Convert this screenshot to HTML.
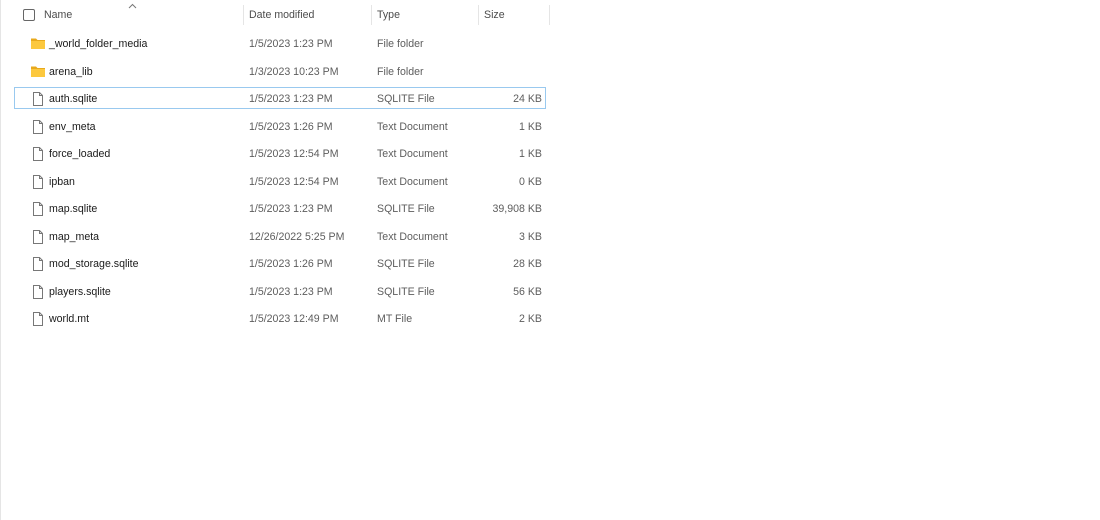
<!DOCTYPE html>
<html><head><style>
html,body{margin:0;padding:0;width:1100px;height:520px;background:#fff;overflow:hidden;font-family:"Liberation Sans",sans-serif;font-size:10.6px;}
.lb{position:absolute;left:0;top:0;width:1px;height:520px;background:#e5e5e5}
.h{position:absolute;top:0;height:30px;left:0;width:560px;color:#4c4c4c}
.sep{position:absolute;top:5px;width:1px;height:20px;background:#e5e5e5}
.t{position:absolute;white-space:nowrap}
.row{position:absolute;left:14px;width:532px;height:22px}
.sel{border:1px solid #99c9ef;box-sizing:border-box}
.sel>*{margin-left:-1px}
.n{position:absolute;left:35px;top:5px;color:#1a1a1a}
.d{position:absolute;left:235px;top:5px;color:#5d5d5d}
.ty{position:absolute;left:363px;top:5px;color:#5d5d5d}
.s{position:absolute;right:4px;top:5px;color:#5d5d5d}
.sel .s{margin-right:-1px}
.ic{position:absolute;left:16px;top:3px}
</style></head><body>
<div class="lb"></div>
<div class="h">
<div style="position:absolute;left:23px;top:9px;width:10px;height:10px;border:1px solid #666;border-radius:2px"></div>
<div class="t" style="left:44px;top:9px">Name</div>
<svg style="position:absolute;left:128px;top:3px" width="9" height="6"><path d="M1 5 L4.5 1.5 L8 5" fill="none" stroke="#777" stroke-width="1"/></svg>
<div class="sep" style="left:243px"></div>
<div class="t" style="left:249px;top:9px">Date modified</div>
<div class="sep" style="left:371px"></div>
<div class="t" style="left:377px;top:9px">Type</div>
<div class="sep" style="left:478px"></div>
<div class="t" style="left:484px;top:9px">Size</div>
<div class="sep" style="left:549px"></div>
</div>
<div id="rows"></div>
<script>
var R=[["_world_folder_media","1/5/2023 1:23 PM","File folder","",1],
["arena_lib","1/3/2023 10:23 PM","File folder","",1],
["auth.sqlite","1/5/2023 1:23 PM","SQLITE File","24 KB",0],
["env_meta","1/5/2023 1:26 PM","Text Document","1 KB",0],
["force_loaded","1/5/2023 12:54 PM","Text Document","1 KB",0],
["ipban","1/5/2023 12:54 PM","Text Document","0 KB",0],
["map.sqlite","1/5/2023 1:23 PM","SQLITE File","39,908 KB",0],
["map_meta","12/26/2022 5:25 PM","Text Document","3 KB",0],
["mod_storage.sqlite","1/5/2023 1:26 PM","SQLITE File","28 KB",0],
["players.sqlite","1/5/2023 1:23 PM","SQLITE File","56 KB",0],
["world.mt","1/5/2023 12:49 PM","MT File","2 KB",0]];
var folder='<svg class="ic" width="16" height="14"><path d="M1 2.5h5l1.5 1.5H15v9H1z" fill="#e8a91c"/><path d="M1 5h14v8H1z" fill="#fcc83e"/></svg>';
var file='<svg class="ic" width="16" height="16"><path d="M3.5 1.5h6l3 3v10h-9z" fill="#fff" stroke="#777"/><path d="M9.5 1.5v3h3" fill="none" stroke="#777"/></svg>';
var h='';
R.forEach(function(r,i){var y=33+i*27.5;
h+='<div class="row'+(i==2?' sel':'')+'" style="top:'+(i==2?y-1:y)+'px">'+(r[4]?folder:file)+'<div class="n">'+r[0]+'</div><div class="d">'+r[1]+'</div><div class="ty">'+r[2]+'</div><div class="s">'+r[3]+'</div></div>';});
document.getElementById('rows').innerHTML=h;
</script>
</body></html>
